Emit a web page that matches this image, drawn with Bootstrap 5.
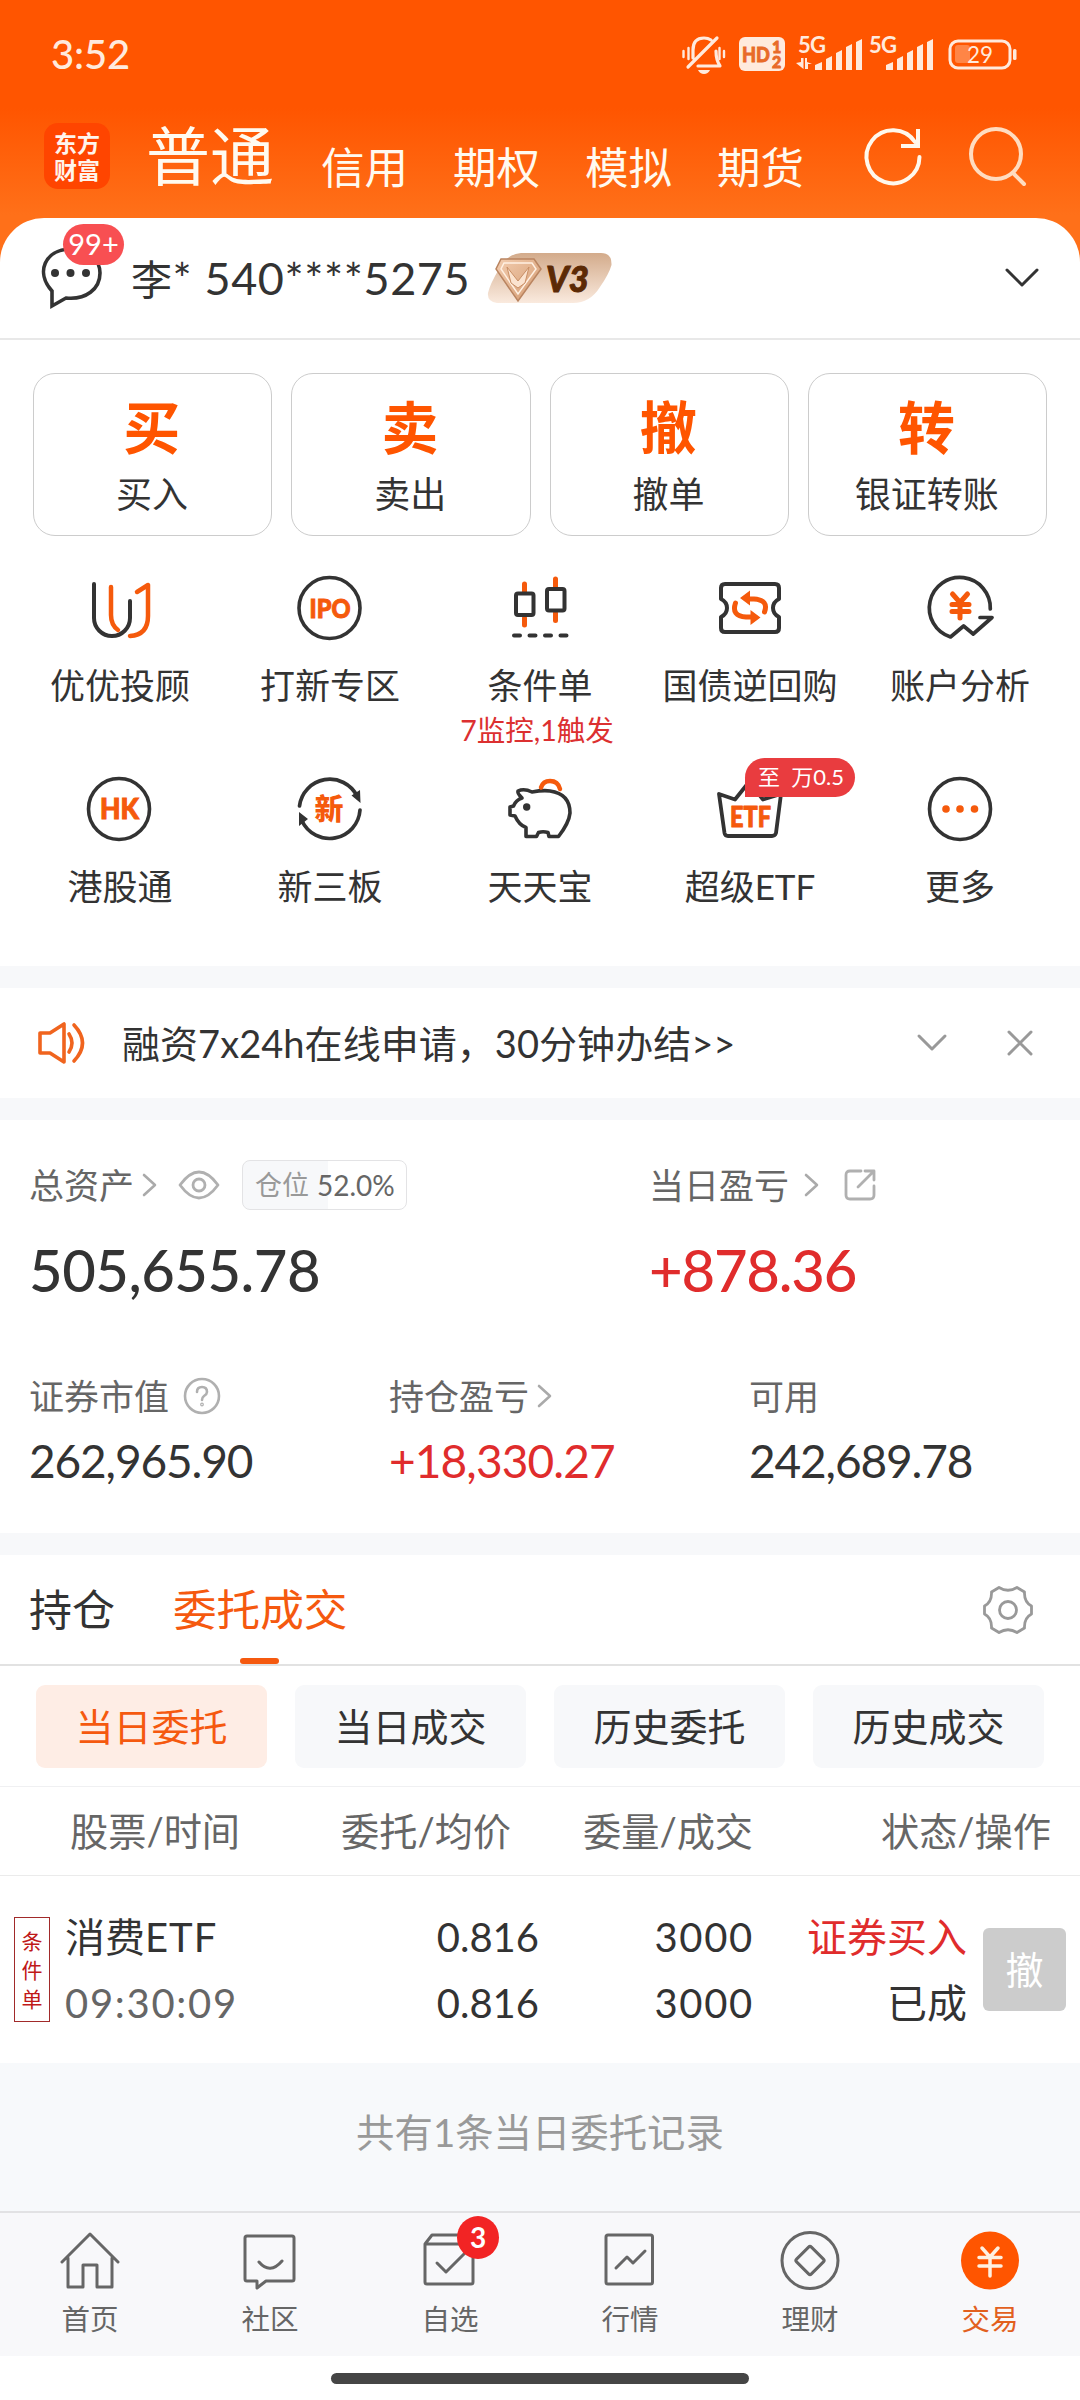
<!DOCTYPE html>
<html lang="zh-CN">
<head>
<meta charset="utf-8">
<meta name="viewport" content="width=device-width, initial-scale=1">
<title>交易</title>
<link href="https://cdn.jsdelivr.net/npm/bootstrap@5.3.0/dist/css/bootstrap.min.css" rel="stylesheet">
<style>
:root{--or:#ff5500;--ink:#333;--mid:#666;--soft:#999;--up:#e02c2c;--band:#f7f8fa}
body{width:1080px;height:2400px;margin:0;background:#fff;color:var(--ink);font-family:Lato,"Noto Sans CJK SC",sans-serif;line-height:1;overflow:hidden}
svg{display:block;flex:none;overflow:visible}
.ln{fill:none;stroke-linecap:round;stroke-linejoin:round}
.top-hero{height:262px;background:linear-gradient(#ff5500 0,#ff5500 108px,#ff7019 215px,#ff7019 100%)}
.status-row{height:106px;padding:2px 40px 0 51px;color:#ffeadd}
.clock{font-size:40px;letter-spacing:-.2px}
.title-row{height:100px;padding:0 54px 0 44px;color:#fffaf0}
.brand{width:66px;height:66px;border-radius:14px;background:#ff4500;font-family:"Noto Sans CJK SC",sans-serif;font-weight:700;font-size:23px;color:#fff4ec}
.brand div{line-height:27px}
.seg-on{font-size:64px;margin-left:36px;width:132px;line-height:66px;white-space:nowrap;flex:none}
.seg{font-size:43.5px;width:132px;line-height:44px}
.sheet{margin-top:-44px;border-radius:44px 44px 0 0;background:#fff;position:relative}
.acct{height:122px;border-bottom:2px solid #e8e8e8;padding:0 41px 0 39px}
.msg-badge{left:24px;top:-22px;width:61px;height:41px;border-radius:21px;background:#f84f52;color:#fff;font-size:29px;line-height:40px;text-align:center}
.acct-no{font-size:45px;letter-spacing:.6px;white-space:pre}
.acct-no span{font-size:41px}
.quick{padding:33px 33px 0;gap:19px}
.quick-btn{height:163px;border:1px solid #ccc;border-radius:22px;flex:1 1 0;padding-top:25px}
.quick-btn b{font-size:57px;line-height:56px;color:var(--or);font-weight:700;margin-left:-2px}
.quick-btn span{font-size:36px;line-height:40px;margin-top:19px;margin-left:-1px}
.tools{padding:36px 15px 0}
.tool{width:210px;height:201px}
.tool-t{font-size:35px;line-height:40px;margin-top:21px;white-space:nowrap}
.tool-s{font-size:28.5px;line-height:32px;margin-top:9px;margin-left:-6px;color:#dc3030;white-space:nowrap}
.ic-t{font-weight:900;fill:#f55a0c;stroke:#f55a0c;stroke-width:1}
.promo{left:100px;top:-15px;width:110px;height:39px;border-radius:20px 20px 20px 0;background:#e93c3f;color:#fff;font-size:22px;line-height:38px;padding-left:13px;white-space:pre}
.band{height:22px;background:var(--band)}
.notice{height:110px;padding:0 47px 0 37px}
.notice-t{font-size:38px;margin-left:35px;letter-spacing:.05px}
.assets{height:413px;padding:40px 29px 0}
.cap{font-size:35px;line-height:50px;height:50px;color:var(--mid)}
.pos-box{width:165px;height:50px;border:1.5px solid #e3e3e5;border-radius:8px;background:linear-gradient(90deg,var(--band) 52%,#fff 52%);font-size:28px;padding-left:12px;margin-left:22px;white-space:nowrap}
.big{font-size:58px;line-height:60px;margin-top:30px;font-weight:500;letter-spacing:-.5px}
.num{font-size:46px;line-height:50px;margin-top:15px;letter-spacing:-1.15px}
.upc{color:var(--up)}
.tabs{height:111px;border-bottom:2px solid #e2e2e2;padding:0 47px 0 29px}
.tab{font-size:43px;height:109px;line-height:109px}
.tab-on{color:#f5590f;margin-left:58px;font-size:43.6px}
.tab-on i{left:50%;margin-left:-20px;bottom:0;width:39px;height:6px;border-radius:3px;background:#f5590f}
.chips{height:121px;border-bottom:1px solid #f0f0f2;padding:0 36px 0;gap:28px}
.chip{flex:1 1 0;height:83px;border-radius:9px;background:var(--band);font-size:38px;line-height:82px;text-align:center}
.chip-on{background:#feede5;color:#f5590f}
.th-row{height:89px;border-bottom:1.5px solid #ebebeb;font-size:38.2px;color:var(--mid);padding:0 29px 0 70px}
.order{height:187px;padding:0 14px}
.order-tag{width:36px;height:105px;border:1.5px solid #a12a2a;color:#c01818;font-size:21px;line-height:29px;padding-top:8px;text-align:center}
.cell-c{line-height:66px;font-size:40px;height:132px}
.wide{letter-spacing:1.7px;margin-right:-2px}
.cancel{width:83px;height:83px;background:#ccc;border-radius:6px;color:#fff;font-size:38px;line-height:82px;text-align:center;margin-left:16px}
.foot-note{height:148px;background:#f7f9fb;color:var(--soft);font-size:38.4px;padding-bottom:10px}
.dock{height:145px;background:#f8f8fa;border-top:2px solid #e2e2e4;color:var(--mid)}
.dock-i{width:180px;padding-top:17px}
.dock-i svg{stroke:var(--mid);stroke-width:3}
.dock-i span{font-size:28.5px;line-height:34px;margin-top:10px}
.dot3{left:97px;top:3px;width:42px;height:43px;border-radius:50%;background:#f22424;color:#fff;font-size:28px;line-height:42px;text-align:center;font-weight:700}
.home-bar{width:418px;height:11px;border-radius:6px;background:#454545;margin:17px auto 0}
</style>
</head>
<body>
<header class="top-hero">
  <div class="status-row d-flex align-items-center justify-content-between">
    <div class="clock fw-medium">3:52</div>
    <svg width="360" height="60" viewBox="0 0 360 60" style="margin-top:-9px" fill="#ffeadd">
      <g class="ln" stroke="#ffeadd" stroke-width="3.200">
        <path d="M13 38V30Q13 18 24 18Q28 18 31 20M36 31Q36 40 40 46H18M8 47L37 18"/>
        <path d="M3.500 31v6M8.500 28v11M39.500 28v11M44 31v6" stroke-width="2.400"/>
      </g>
      <path d="M18 50h12q-2 4-6 4t-6-4z"/>
      <rect x="59" y="17" width="46" height="34" rx="6"/>
      <g fill="#e86a28" stroke="#e86a28" stroke-width=".8" font-weight="900">
        <text x="62" y="41.500" font-size="21" textLength="28" lengthAdjust="spacingAndGlyphs">HD</text>
        <text x="92" y="33" font-size="16">1</text>
        <text x="92" y="47.500" font-size="16">2</text>
      </g>
      <text x="118" y="33" font-size="22" font-weight="700" textLength="28">5G</text>
      <text x="189" y="33" font-size="22" font-weight="700" textLength="28">5G</text>
      <path d="M116 43l5-1v-4h2.500v11zM125 38h2v4l5 2-4 0v5h-3z"/>
      <path id="sig" d="M135 50v-5l7-3v8zM146 50V39l6-3v14zM156 50V33l6-3v20zM166 50V27l6-3v26zM176 50V22l6-3v31z"/>
      <use href="#sig" x="71"/>
      <rect x="270" y="21" width="60" height="27" rx="8" fill="none" stroke="#ffeadd" stroke-width="3"/>
      <rect x="275" y="25" width="15" height="18" rx="3" fill="#ff8546"/>
      <rect x="333" y="29" width="3.500" height="11" rx="1.500"/>
      <text x="287" y="43" font-size="24" textLength="26" lengthAdjust="spacingAndGlyphs">29</text>
    </svg>
  </div>
  <div class="title-row d-flex align-items-center">
    <div class="brand text-center d-flex flex-column align-items-center justify-content-center flex-shrink-0"><div>东方</div><div>财富</div></div>
    <div class="seg-on">普通</div>
    <div class="d-flex" style="margin-left:43px;margin-top:22px">
      <div class="seg">信用</div><div class="seg">期权</div><div class="seg">模拟</div><div class="seg">期货</div>
    </div>
    <svg width="60" height="60" viewBox="0 0 60 60" style="margin-left:15px" class="ln" stroke="#fff8ec" stroke-width="4"><path d="M55.500 31A26.500 26.500 0 1 1 51 16"/><path d="M37 20H54V3" stroke-linecap="butt" stroke-linejoin="miter"/></svg>
    <svg width="60" height="60" viewBox="0 0 60 60" style="margin-left:44px" class="ln" stroke="#ffdcc0" stroke-width="4"><circle cx="28" cy="28" r="25"/><path d="M45 47L56 58"/></svg>
  </div>
</header>

<main class="sheet">
  <div class="acct d-flex align-items-center">
    <div class="position-relative">
      <svg width="64" height="64" viewBox="0 0 64 64" class="ln" stroke="#333" stroke-width="3.600"><path d="M13 60V45C-4 26 6 4 31 3C51 3 61 15 61 27C61 43 47 54 27 52Z" stroke-linejoin="miter"/><g fill="#333" stroke="none"><circle cx="16" cy="27" r="4"/><circle cx="31.500" cy="27" r="4"/><circle cx="47" cy="27" r="4"/></g></svg>
      <div class="msg-badge position-absolute">99+</div>
    </div>
    <div class="acct-no" style="margin-left:28px"><span>李</span>* 540****5275</div>
    <svg width="128" height="52" viewBox="0 0 128 52" style="margin-left:17px">
      <defs><linearGradient id="vg" x1="0" y1="0" x2="0" y2="1"><stop offset="0" stop-color="#d3ab8b"/><stop offset="1" stop-color="#faeade"/></linearGradient>
      <linearGradient id="dg" x1="0" y1="0" x2="1" y2="1"><stop offset="0" stop-color="#f3cdb0"/><stop offset="1" stop-color="#d39a70"/></linearGradient></defs>
      <path d="M34 1H114Q125 1 124.500 13Q122 22 113 35Q103 51 86 51H10Q0 50 1 41Q3 32 12 17Q20 2 34 1Z" fill="url(#vg)"/>
      <path d="M14 7H47L54 17L31 49L9 17Z" fill="url(#dg)" stroke="#b98460" stroke-width="1.500"/>
      <path d="M17 11H45L49 17L31 42L14 17Z" fill="none" stroke="#fff0e2" stroke-width="1.500"/>
      <path d="M20 15l11 14 11-14-4 16-7 5-7-5z" fill="#fbe3cf" stroke="#c98f66"/>
      <text x="59" y="39.500" font-size="36" font-weight="900" font-style="italic" fill="#5c2a05" stroke="#5c2a05" stroke-width="1" textLength="43" lengthAdjust="spacingAndGlyphs">V3</text>
    </svg>
    <svg width="34" height="20" viewBox="0 0 34 20" class="ln ms-auto" stroke="#333" stroke-width="3"><path d="M2 2L17 17L32 2"/></svg>
  </div>

  <div class="quick d-flex">
    <div class="quick-btn d-flex flex-column align-items-center"><b>买</b><span>买入</span></div>
    <div class="quick-btn d-flex flex-column align-items-center"><b>卖</b><span>卖出</span></div>
    <div class="quick-btn d-flex flex-column align-items-center"><b>撤</b><span>撤单</span></div>
    <div class="quick-btn d-flex flex-column align-items-center"><b>转</b><span>银证转账</span></div>
  </div>

  <div class="tools d-flex flex-wrap">
    <div class="tool d-flex flex-column align-items-center">
      <svg width="72" height="72" class="ln" stroke-width="4"><path stroke="#333" d="M10 12V46a18 18 0 0 0 36 0V29"/><path stroke="#f55a0c" stroke-width="4.500" d="M27 15V43q0 10 7 15M53 20L64 13V44q0 19-18 20"/></svg>
      <div class="tool-t">优优投顾</div></div>
    <div class="tool d-flex flex-column align-items-center">
      <svg width="72" height="72"><circle cx="35.500" cy="36" r="30.500" fill="none" stroke="#333" stroke-width="3.600"/><text class="ic-t" x="15.500" y="46" font-size="27" textLength="41" lengthAdjust="spacingAndGlyphs">IPO</text></svg>
      <div class="tool-t">打新专区</div></div>
    <div class="tool d-flex flex-column align-items-center">
      <svg width="72" height="72" class="ln" stroke-width="4"><path stroke="#f55a0c" stroke-width="5" d="M20.500 12v8M20.500 46v7M51.500 7v8M51.500 41v7.500"/><rect x="12" y="21.500" width="17.500" height="21.500" rx="2" stroke="#333"/><rect x="43" y="17" width="17.500" height="21.500" rx="2" stroke="#333"/><path stroke="#333" d="M10 63.500h6M25.500 63.500h6M41 63.500h6M56.500 63.500h6"/></svg>
      <div class="tool-t">条件单</div><div class="tool-s">7监控,1触发</div></div>
    <div class="tool d-flex flex-column align-items-center">
      <svg width="72" height="72" class="ln" stroke-width="4"><path stroke="#333" d="M11 12H61Q65 12 65 16V27Q59 30 59 36T65 45V56Q65 60 61 60H11Q7 60 7 56V45Q13 42 13 36T7 27V16Q7 12 11 12Z"/><path stroke="#f55a0c" stroke-width="5" d="M35 27H40Q55 28 50.500 40M37 45H32Q17 44 21.500 31"/><path fill="#f55a0c" stroke="none" d="M26 26l10-7.500v15zM46.500 45.500l-10-7.500v15z"/></svg>
      <div class="tool-t">国债逆回购</div></div>
    <div class="tool d-flex flex-column align-items-center">
      <svg width="72" height="72" class="ln" stroke-width="3.700"><path stroke="#333" d="M66.300 37A30.500 30.500 0 1 0 26.500 65L39.600 54L49.200 62L68 45.500H56"/><path stroke="#f55a0c" stroke-width="5" d="M28.500 22l7.500 8.500 7.500-8.500M28 32.500h17M28 39.500h17M36 31v15"/></svg>
      <div class="tool-t">账户分析</div></div>
    <div class="tool d-flex flex-column align-items-center">
      <svg width="72" height="72"><circle cx="35" cy="36" r="30.500" fill="none" stroke="#333" stroke-width="3.600"/><text class="ic-t" x="16" y="46" font-size="28" textLength="39" lengthAdjust="spacingAndGlyphs">HK</text></svg>
      <div class="tool-t">港股通</div></div>
    <div class="tool d-flex flex-column align-items-center">
      <svg width="72" height="72" class="ln" stroke-width="3.700"><path stroke="#333" d="M5.500 33A30.500 30.500 0 0 1 63 23M66 37A30.500 30.500 0 0 1 8 48"/><path fill="#333" stroke="none" d="M57.500 22.500l8.500-5.500 .5 13zM5 53l0-14 9 7z"/><text x="20.500" y="46.500" font-size="29" font-weight="900" fill="#f55a0c">新</text></svg>
      <div class="tool-t">新三板</div></div>
    <div class="tool d-flex flex-column align-items-center">
      <svg width="72" height="72" class="ln" stroke-width="3.600"><path stroke="#333" d="M14 18Q20 15 28 19Q39 17 46 18C60 20 66 28 66 40Q65 50 54.500 63.500H45L44 59.500Q39 58 34.500 59.500L32.500 63.500H22V54.500Q15 52 11 43L6 42V34L9.500 33Q12 27 18 25Q13 20 14 18Z"/><circle cx="22.700" cy="34" r="3.700" fill="#333"/><path stroke="#f55a0c" stroke-width="4.500" d="M37 14.500Q39 8 46 8Q54 8 56 16"/></svg>
      <div class="tool-t">天天宝</div></div>
    <div class="tool d-flex flex-column align-items-center position-relative">
      <svg width="72" height="72" class="ln" stroke-width="3.800"><path stroke="#333" d="M5 21L21 26.500L35 9L49 26.500L67 21L62 60Q61 63 58 63H14Q11 63 10.500 60Z"/><text class="ic-t" x="16" y="53.500" font-size="29" textLength="41" lengthAdjust="spacingAndGlyphs">ETF</text></svg>
      <div class="tool-t">超级ETF</div>
      <div class="promo position-absolute">至  万0.5</div></div>
    <div class="tool d-flex flex-column align-items-center">
      <svg width="72" height="72"><circle cx="36" cy="36" r="30.500" fill="none" stroke="#333" stroke-width="3.600"/><g fill="#f55a0c"><circle cx="22" cy="36" r="3.800"/><circle cx="36" cy="36" r="3.800"/><circle cx="50.500" cy="36" r="3.800"/></g></svg>
      <div class="tool-t">更多</div></div>
  </div>
</main>

<div class="band position-relative" style="margin-top:-8px"></div>
<section class="notice d-flex align-items-center">
  <svg width="50" height="44" viewBox="0 0 50 44" class="ln" stroke="#f0641e" stroke-width="3.600"><path d="M3 12H13L27 3V41L13 32H3Z"/><path d="M32 13Q38 22 32 31M37 4Q54 22 37 40"/></svg>
  <div class="notice-t">融资7x24h在线申请，30分钟办结&gt;&gt;</div>
  <svg width="30" height="18" viewBox="0 0 30 18" class="ln ms-auto" stroke="#999" stroke-width="3"><path d="M2 2L15 15L28 2"/></svg>
  <svg width="26" height="26" viewBox="0 0 26 26" style="margin-left:60px" class="ln" stroke="#999" stroke-width="3"><path d="M2 2L24 24M24 2L2 24"/></svg>
</section>
<div class="band"></div>

<section class="assets">
  <div class="d-flex">
    <div style="width:620px">
      <div class="cap d-flex align-items-center">总资产
        <svg width="16" height="24" viewBox="0 0 16 24" style="margin-left:8px" class="ln" stroke="#aaa" stroke-width="2.600"><path d="M2 2L13 12L2 22"/></svg>
        <svg width="42" height="30" viewBox="0 0 42 30" style="margin-left:20px" class="ln" stroke="#b0b0b0" stroke-width="2.800"><path d="M2 15Q21-11 40 15Q21 41 2 15Z"/><circle cx="21" cy="15" r="6"/></svg>
        <div class="pos-box d-flex align-items-center"><span style="color:#999;font-size:27px">仓位</span><span style="margin-left:8px">52.0%</span></div>
      </div>
      <div class="big">505,655.78</div>
    </div>
    <div>
      <div class="cap d-flex align-items-center">当日盈亏
        <svg width="16" height="24" viewBox="0 0 16 24" style="margin-left:15px" class="ln" stroke="#aaa" stroke-width="2.600"><path d="M2 2L13 12L2 22"/></svg>
        <svg width="34" height="34" viewBox="0 0 34 34" style="margin-left:23px" class="ln" stroke="#b0b0b0" stroke-width="2.800"><path d="M18 3H7Q3 3 3 7V27Q3 31 7 31H27Q31 31 31 27V18M15 19L31 3M22 3H31V12"/></svg>
      </div>
      <div class="big upc" style="letter-spacing:-1.2px">+878.36</div>
    </div>
  </div>
  <div class="d-flex" style="margin-top:71px">
    <div style="width:360px"><div class="cap d-flex align-items-center">证券市值
      <svg width="38" height="38" viewBox="0 0 38 38" style="margin-left:14px" class="ln" stroke="#b0b0b0" stroke-width="2.600"><circle cx="19" cy="19" r="17"/><path d="M14 15Q14 10 19 10T24 15Q24 17 21 19Q19 20.500 19 23"/><circle cx="19" cy="27.500" r=".6"/></svg></div>
      <div class="num">262,965.90</div></div>
    <div style="width:360px"><div class="cap d-flex align-items-center">持仓盈亏
      <svg width="16" height="24" viewBox="0 0 16 24" style="margin-left:8px" class="ln" stroke="#aaa" stroke-width="2.600"><path d="M2 2L13 12L2 22"/></svg></div>
      <div class="num upc" style="letter-spacing:-.9px">+18,330.27</div></div>
    <div><div class="cap">可用</div><div class="num">242,689.78</div></div>
  </div>
</section>
<div class="band"></div>

<nav class="tabs d-flex align-items-center">
  <div class="tab">持仓</div>
  <div class="tab tab-on position-relative">委托成交<i class="position-absolute"></i></div>
  <svg width="50" height="50" viewBox="0 0 50 50" class="ln ms-auto" stroke="#999" stroke-width="2.800"><circle cx="25" cy="25" r="8.500"/><path d="M16 2.500Q25 8 34 2.500L41.500 7Q41 17 48.500 21V29Q41 33 41.500 43L34 47.500Q25 42 16 47.500L8.500 43Q9 33 1.500 29V21Q9 17 8.500 7Z"/></svg>
</nav>
<div class="chips d-flex align-items-center">
  <div class="chip chip-on">当日委托</div><div class="chip">当日成交</div><div class="chip">历史委托</div><div class="chip">历史成交</div>
</div>
<div class="th-row d-flex align-items-center">
  <div style="width:271px">股票/时间</div><div style="width:242px">委托/均价</div><div>委量/成交</div><div class="ms-auto">状态/操作</div>
</div>
<section class="order d-flex align-items-center">
  <div class="order-tag">条<br>件<br>单</div>
  <div class="cell-c" style="width:272px;margin-left:15px"><div>消费<span style="letter-spacing:1px">ETF</span></div><div style="color:#666;letter-spacing:1.7px">09:30:09</div></div>
  <div class="cell-c text-end" style="width:202px"><div>0.816</div><div>0.816</div></div>
  <div class="cell-c text-end" style="width:213px"><div class="wide">3000</div><div class="wide">3000</div></div>
  <div class="cell-c text-end" style="width:215px"><div class="upc">证券买入</div><div>已成</div></div>
  <div class="cancel">撤</div>
</section>
<div class="foot-note d-flex align-items-center justify-content-center">共有1条当日委托记录</div>

<footer class="dock d-flex">
  <div class="dock-i d-flex flex-column align-items-center"><svg width="62" height="62" class="ln"><path d="M3 32L31 4L59 32M9 28V57H24V35H38V57H53V28"/></svg><span>首页</span></div>
  <div class="dock-i d-flex flex-column align-items-center"><svg width="62" height="62" class="ln"><path d="M8 6H53Q55 6 55 8V49Q55 51 53 51H27L18 58V51H8Q6 51 6 49V8Q6 6 8 6ZM20 32Q31 45 43 31"/></svg><span>社区</span></div>
  <div class="dock-i d-flex flex-column align-items-center position-relative"><svg width="62" height="62" class="ln"><path d="M6 14L13 5H48L54 14V52Q54 54 52 54H8Q6 54 6 52ZM7 14H54M18 33L27 42L45 24"/></svg><span>自选</span><div class="dot3 position-absolute">3</div></div>
  <div class="dock-i d-flex flex-column align-items-center"><svg width="62" height="62" class="ln"><rect x="7" y="5" width="46.500" height="49" rx="2"/><path d="M17 38L28 27L34 33L46 21"/></svg><span>行情</span></div>
  <div class="dock-i d-flex flex-column align-items-center"><svg width="62" height="62" class="ln"><circle cx="31" cy="30.500" r="28"/><rect x="20.500" y="20" width="21" height="21" rx="2" transform="rotate(45 31 30.500)"/></svg><span>理财</span></div>
  <div class="dock-i d-flex flex-column align-items-center" style="color:#e2601e"><svg width="62" height="62" class="ln"><circle cx="31" cy="30.500" r="29" fill="#ff5500" stroke="none"/><path stroke="#fff0e0" stroke-width="3.500" d="M23 18L31 27L39 18M20 27.500H42M20 36H42M31 27V46"/></svg><span>交易</span></div>
</footer>
<div class="home-bar"></div>
<script src="https://cdn.jsdelivr.net/npm/bootstrap@5.3.0/dist/js/bootstrap.bundle.min.js"></script>
</body>
</html>
